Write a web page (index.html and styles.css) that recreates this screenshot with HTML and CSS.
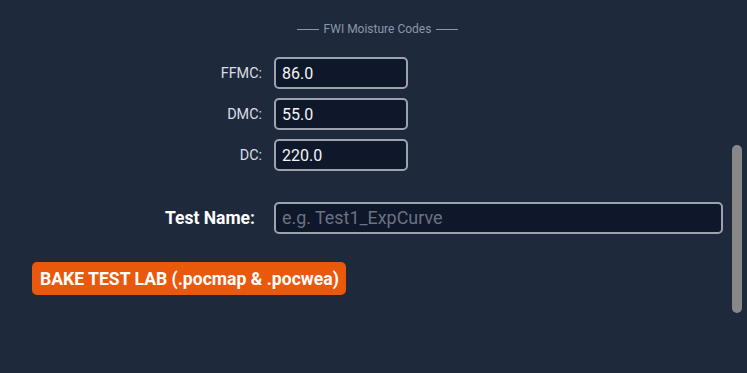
FILE: index.html
```html
<!DOCTYPE html>
<html lang="en">

<head>
    <meta charset="UTF-8">
    <title>Test Lab</title>
    <link rel="stylesheet" href="styles.css">
</head>

<body>
    <main class="panel">
        <h3 class="section-title">FWI Moisture Codes</h3>

        <section class="fwi-grid">
            <label for="ffmc">FFMC:</label>
            <input id="ffmc" class="field" type="text" value="86.0">
            <label for="dmc">DMC:</label>
            <input id="dmc" class="field" type="text" value="55.0">
            <label for="dc">DC:</label>
            <input id="dc" class="field" type="text" value="220.0">
        </section>

        <section class="name-row">
            <label for="testname">Test Name:</label>
            <input id="testname" class="field" type="text" placeholder="e.g. Test1_ExpCurve">
        </section>

        <button class="bake-btn">BAKE TEST LAB (.pocmap &amp; .pocwea)</button>
    </main>

    <div class="scroll-thumb"></div>
</body>

</html>
```

FILE: styles.css
```css
html,
body {
    margin: 0;
    height: 100%;
    overflow: hidden;
}

body {
    background-color: #1e293b;
    font-family: Roboto, "Liberation Sans", sans-serif;
    color: #e5e7eb;
}

.panel {
    padding: 22px 24px 0 32px;
}

.section-title {
    margin: 0;
    display: flex;
    justify-content: center;
    align-items: center;
    gap: 5px;
    font-size: 12px;
    font-weight: normal;
    line-height: 14px;
    color: #8a97aa;
}

.section-title::before,
.section-title::after {
    content: "";
    width: 22px;
    height: 1px;
    background-color: #8a97aa;
}

.fwi-grid {
    margin-top: 21px;
    display: grid;
    grid-template-columns: 230px 134px;
    column-gap: 12px;
    row-gap: 9px;
    align-items: center;
}

.fwi-grid label {
    text-align: right;
    font-size: 14.4px;
    color: #d8dde5;
}

.field {
    box-sizing: border-box;
    height: 32px;
    padding: 0 6px;
    background-color: #0f172a;
    border: 2px solid #9ca3af;
    border-radius: 5px;
    font-family: Roboto, "Liberation Sans", sans-serif;
    font-size: 16px;
    color: #f3f4f6;
    outline: none;
}

.field::placeholder {
    color: #6b7280;
    font-size: 17.9px;
}

.name-row {
    margin-top: 31px;
    display: grid;
    grid-template-columns: 223px 1fr;
    column-gap: 19px;
    align-items: center;
}

.name-row label {
    text-align: right;
    font-size: 17.5px;
    font-weight: bold;
    color: #ffffff;
}

.bake-btn {
    margin-top: 28px;
    height: 33px;
    padding: 0 7px 0 8px;
    background-color: #ea580c;
    border: none;
    border-radius: 5px;
    font-family: Roboto, "Liberation Sans", sans-serif;
    font-size: 17.6px;
    font-weight: bold;
    color: #ffffff;
}

.scroll-thumb {
    position: absolute;
    top: 145px;
    right: 5px;
    width: 10px;
    height: 168px;
    border-radius: 5px;
    background-color: #888888;
}
```
